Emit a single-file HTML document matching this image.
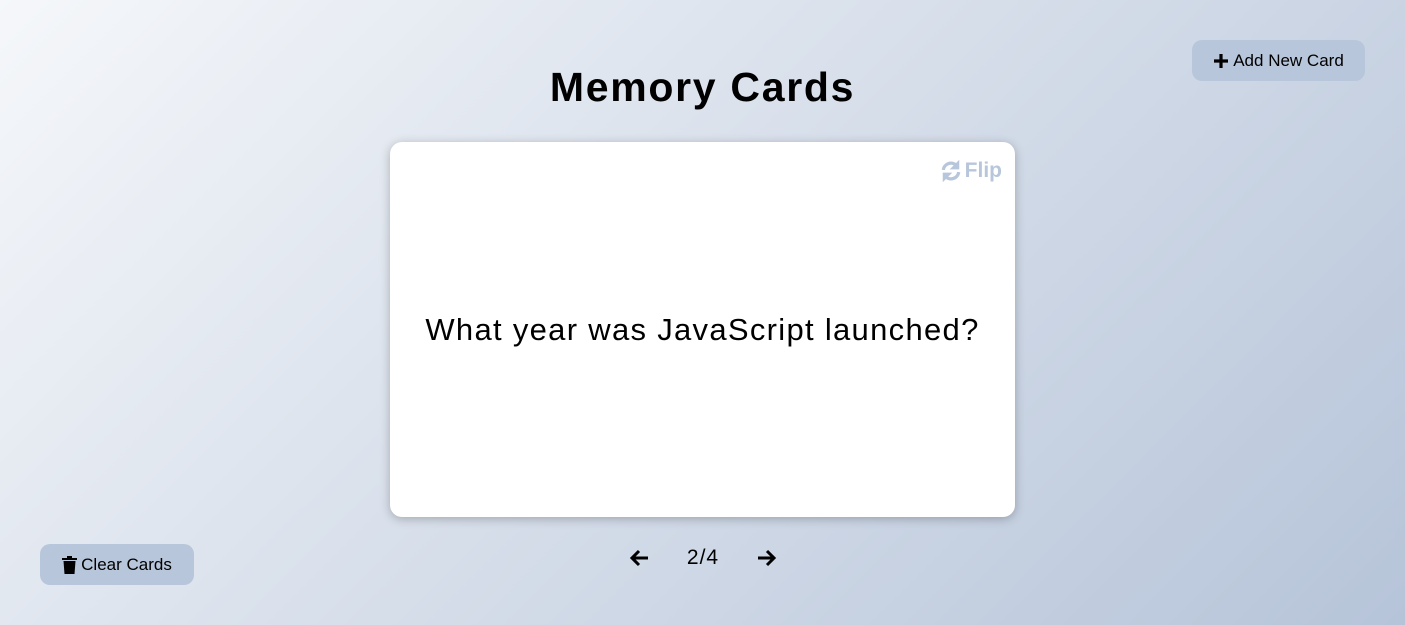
<!DOCTYPE html>
<html><head><style>
*{box-sizing:border-box;margin:0;padding:0}
html,body{width:1405px;height:625px;overflow:hidden}
body{background:linear-gradient(135deg,#f5f7fa 0%,#b6c4d9 100%);font-family:"Liberation Sans",sans-serif;position:relative}
h1{position:absolute;top:64px;left:0;width:1405px;text-align:center;font-size:41px;font-weight:bold;color:#000;letter-spacing:1.7px}
.btn{position:absolute;background:#b8c6db;border-radius:10px;font-size:17px;color:#000;display:flex;align-items:center;justify-content:center;gap:4px}
.add{left:1192px;top:40px;width:173px;height:41px}
.clear{left:40px;top:544px;width:154px;height:41px}
.card{position:absolute;left:390px;top:142px;width:625px;height:375px;background:#fff;border-radius:12px;box-shadow:0 2px 10px rgba(0,0,0,.25);display:flex;align-items:center;justify-content:center;font-size:31px;letter-spacing:1.3px;color:#000}
.flip{position:absolute;right:13px;top:17px;color:#b8c6db;font-weight:bold;font-size:21px;letter-spacing:0;display:flex;align-items:center;gap:3px}
.nav{position:absolute;top:544px;left:628px;width:150px;height:28px;display:flex;align-items:center;justify-content:space-between;font-size:21px;letter-spacing:1px}
</style></head><body>
<h1>Memory Cards</h1>
<div class="btn add"><svg width="16" height="16" viewBox="0 0 16 16"><path d="M8 1v14M1 8h14" stroke="#000" stroke-width="3.2"/></svg>Add New Card</div>
<div class="card">What year was JavaScript launched?
<div class="flip"><svg width="22" height="22" viewBox="0 0 20 20" fill="none" stroke="#b8c6db" stroke-width="3"><path d="M3 9a7 7 0 0 1 12-4"/><path d="M17 11a7 7 0 0 1-12 4"/><path d="M17 1v7h-7z" fill="#b8c6db" stroke-width="1"/><path d="M3 19v-7h7z" fill="#b8c6db" stroke-width="1"/></svg>Flip</div>
</div>
<div class="nav">
<svg width="22" height="20" viewBox="0 0 22 20"><path d="M20 10H4M11 3l-7 7 7 7" stroke="#000" stroke-width="3" fill="none"/></svg>
<span>2/4</span>
<svg width="22" height="20" viewBox="0 0 22 20"><path d="M2 10h16M11 3l7 7-7 7" stroke="#000" stroke-width="3" fill="none"/></svg>
</div>
<div class="btn clear"><svg width="15" height="18" viewBox="0 0 15 18"><path d="M0 2h15v2H0zM5 0h5v2H5zM1.5 5h12l-1 13h-10z" fill="#000"/></svg>Clear Cards</div>
</body></html>
